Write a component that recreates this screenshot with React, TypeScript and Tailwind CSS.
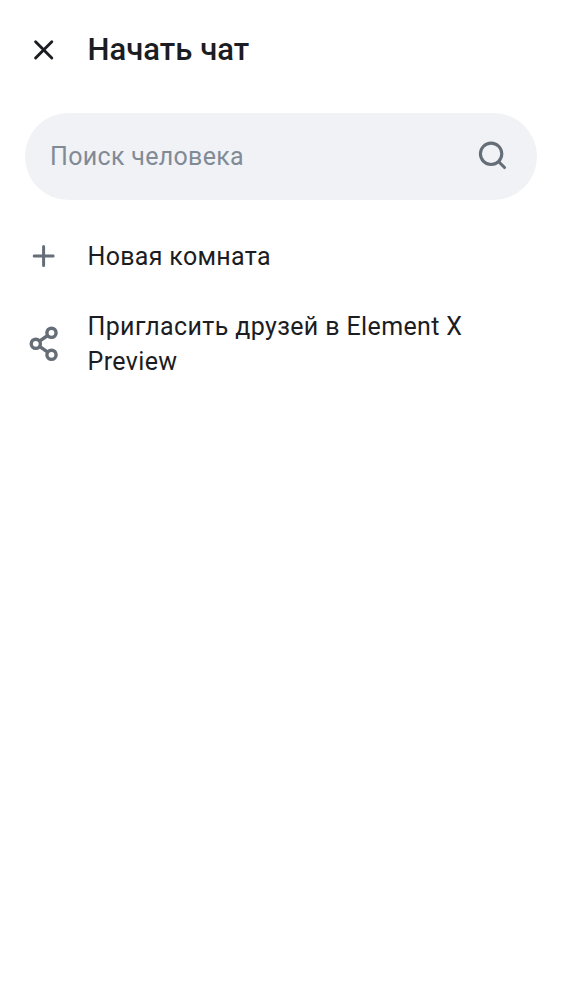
import React from "react";

function CloseIcon() {
  return (
    <svg width="38" height="38" viewBox="0 0 38 38" fill="none" stroke="#1b1d22" strokeWidth="2.9" strokeLinecap="round">
      <path d="m10.6 10.8 16.2 16.2M26.8 10.8 10.6 27" />
    </svg>
  );
}

function SearchIcon() {
  return (
    <svg width="38" height="38" viewBox="0 0 38 38" fill="none" stroke="#656d77" strokeWidth="3.1" strokeLinecap="round">
      <circle cx="17.1" cy="16.8" r="10.7" />
      <path d="m25 25 5.5 5.5" />
    </svg>
  );
}

function PlusIcon() {
  return (
    <svg width="38" height="38" viewBox="0 0 38 38" fill="none" stroke="#656d77" strokeWidth="3" strokeLinecap="round">
      <path d="M18.6 9.6v18.9M9.2 19.1h18.9" />
    </svg>
  );
}

function ShareIcon() {
  return (
    <svg width="38" height="38" viewBox="0 0 38 38" fill="none" stroke="#656d77" strokeWidth="3.4">
      <circle cx="10.8" cy="18.8" r="4.6" />
      <circle cx="26.5" cy="7.8" r="4.6" />
      <circle cx="26.5" cy="29.8" r="4.6" />
      <path d="m14.5 16.2 8.2-5.7M14.5 21.4l8.2 5.7" />
    </svg>
  );
}

export default function App() {
  return (
    <main className="h-[1000px] w-[562px] bg-white font-[Roboto,sans-serif] text-[#1b1d22]">
      <header className="flex h-[100px] items-center gap-[25px] pl-[24.5px]">
        <button aria-label="Закрыть"><CloseIcon /></button>
        <h1 className="text-[31px] leading-[40px] font-medium tracking-[0.04px]">Начать чат</h1>
      </header>
      <div className="mx-[25px] mt-[12.5px] flex h-[87.5px] items-center justify-between rounded-full bg-[#f0f2f5] pr-[25px] pl-[25px]">
        <span className="pt-px text-[25px] leading-[34px] tracking-[0.32px] text-[#818a95]">Поиск человека</span>
        <SearchIcon />
      </div>
      <ul className="mt-[12px] text-[25px] leading-[34px] tracking-[0.37px]">
        <li className="flex h-[88px] items-center gap-[25px] pl-[24.5px]">
          <PlusIcon />
          <span className="pt-[2px] tracking-[0.32px]">Новая комната</span>
        </li>
        <li className="flex h-[88px] items-center gap-[25px] pl-[24.5px]">
          <ShareIcon />
          <span className="pb-px leading-[35px]">Пригласить друзей в Element X<br />Preview</span>
        </li>
      </ul>
    </main>
  );
}
